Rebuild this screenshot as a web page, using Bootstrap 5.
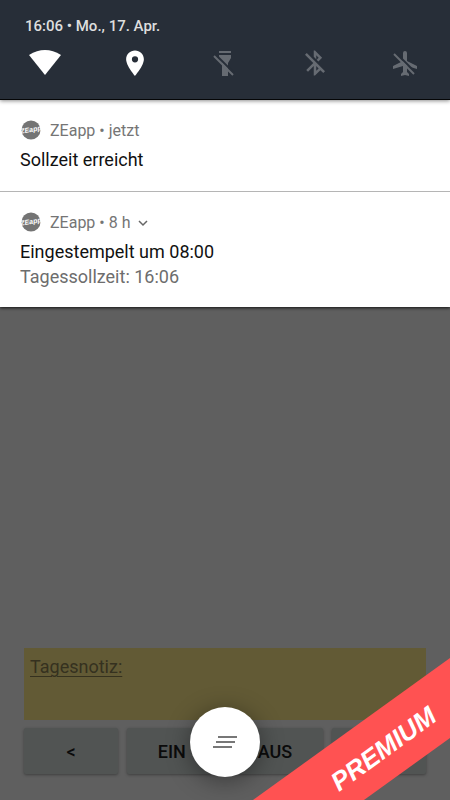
<!DOCTYPE html>
<html lang="de">
<head>
<meta charset="utf-8">
<meta name="viewport" content="width=device-width, initial-scale=1">
<title>ZEapp</title>
<link href="https://cdn.jsdelivr.net/npm/bootstrap@5.3.0/dist/css/bootstrap.min.css" rel="stylesheet">
<style>
body { font-family: Roboto, "Noto Sans", sans-serif; background: #5f5f5f; color: #000; }
.status-bar { background: #272e38; padding: 16px 0 23px; border-bottom: 1px solid #050607; z-index: 1; box-shadow: 0 1px 4px rgba(0,0,0,.45); }
.status-time { font-size: 15px; font-weight: 500; line-height: 20px; color: #dedede; padding-left: 25px; }
.quick { height: 28px; color: #fff; }
.quick.inactive { color: #666b72; }
.quick svg, .notice svg, .clear-all svg { display: block; }
.shade { background: #fff; box-shadow: 0 1px 3px rgba(0,0,0,.8); }
.notice { padding: 20px 20px 19px; }
.notice:last-child { padding-bottom: 18px; }
.notice + .notice { border-top: 1px solid #b5b5b5; }
.notice-head { font-size: 16px; line-height: 22px; color: #757575; gap: 8px; }
.notice-title, .notice-text { font-size: 18px; line-height: 25px; }
.notice-title { margin-top: 5px; color: #111; }
.notice-text { color: #6d6d6d; }
.expand { color: #666; }
.day-panel { padding: 0 24px 26px; }
.day-note { height: 72px; padding: 6px; background: #625a35; color: #35311f; font-size: 18px; line-height: 26px; text-decoration: underline; text-underline-offset: 3px; text-decoration-thickness: 1px; }
.punch-row { display: grid; grid-template-columns: 94fr 196fr 94fr; gap: 9px; margin-top: 8px; }
.punch { height: 46px; padding: 0; border-radius: 2px; background: #515453; color: #0b0b0b; font-size: 18px; font-weight: 500; box-shadow: 0 1px 3px rgba(0,0,0,.35); }
.punch-pair { gap: 72px; }
.clear-all { width: 70px; height: 70px; bottom: 23px; background: #fff; box-shadow: 0 4px 24px rgba(0,0,0,.4); }
.ribbon text { font: italic 700 26px "Liberation Sans", sans-serif; fill: #fff; }
.app-mark text { font: italic 700 7px "Liberation Sans", sans-serif; fill: #fff; }
</style>
</head>
<body>
<div class="position-relative d-flex flex-column min-vh-100 overflow-hidden">
  <header class="status-bar position-relative">
    <div class="status-time">16:06 • Mo., 17. Apr.</div>
    <div class="d-flex mt-2 pt-1">
      <button class="btn quick border-0 flex-fill w-25 p-0 d-flex justify-content-center" aria-label="WLAN"><svg width="34" height="30" viewBox="0 0 34 30"><path fill="currentColor" d="M1 7Q17-3 33 7L17 27Z"/></svg></button>
      <button class="btn quick border-0 flex-fill w-25 p-0 d-flex justify-content-center" aria-label="Standort"><svg width="30" height="30" viewBox="0 0 24 24"><path fill="currentColor" d="M12 2C8.100 2 4.900 5 4.900 9c0 5.300 7.100 13.300 7.100 13.300s7.100-8 7.100-13.300C19.100 5 15.900 2 12 2zm0 9.500a2.500 2.500 0 1 1 0-5 2.500 2.500 0 0 1 0 5z"/></svg></button>
      <button class="btn quick inactive border-0 flex-fill w-25 p-0 d-flex justify-content-center" aria-label="Taschenlampe"><svg width="30" height="30" viewBox="0 0 30 30"><path fill="currentColor" d="M9 3h12v2H9zM9 7h12v3l-3 5v13h-6V15L9 10z"/><path stroke="#272e38" stroke-width="2" d="M4 5l20 20"/><path stroke="currentColor" stroke-width="2" d="M4 8l19 19"/></svg></button>
      <button class="btn quick inactive border-0 flex-fill w-25 p-0 d-flex justify-content-center" aria-label="Bluetooth"><svg width="30" height="30" viewBox="0 0 24 24"><path fill="currentColor" d="M13 5.800l1.900 1.900-1.600 1.600 1.400 1.400 3-3L12 2h-1v5l2 2zM5.400 4L4 5.400l6.600 6.600L5 17.600 6.400 19l4.600-4.600V22h1l4.300-4.300 2.300 2.300 1.400-1.400zm7.600 14.200v-3.800l1.900 1.900z"/></svg></button>
      <button class="btn quick inactive border-0 flex-fill w-25 p-0 d-flex justify-content-center" aria-label="Flugmodus"><svg width="30" height="30" viewBox="0 0 30 30"><path fill="currentColor" d="M13 5a2 2 0 0 1 4 0v8l10 5v3l-10-3v6l2 2v2l-4-1-4 1v-2l2-2v-6L3 21v-3l10-5z"/><path stroke="#272e38" stroke-width="2" d="M5 4l22 22"/><path stroke="currentColor" stroke-width="2" d="M4 6l20 20"/></svg></button>
    </div>
  </header>
  <main class="flex-grow-1 d-flex flex-column">
    <section class="shade">
      <article class="notice">
        <div class="notice-head d-flex align-items-center">
          <svg class="app-mark" width="22" height="22" viewBox="0 0 22 22" aria-hidden="true"><circle cx="11" cy="10" r="9.500" fill="#747474"/><text x="11" y="12" text-anchor="middle" transform="rotate(-10 11 10)">ZEapp</text></svg>
          <span>ZEapp • jetzt</span>
        </div>
        <div class="notice-title">Sollzeit erreicht</div>
      </article>
      <article class="notice">
        <div class="notice-head d-flex align-items-center">
          <svg class="app-mark" width="22" height="22" viewBox="0 0 22 22" aria-hidden="true"><circle cx="11" cy="10" r="9.500" fill="#747474"/><text x="11" y="12" text-anchor="middle" transform="rotate(-10 11 10)">ZEapp</text></svg>
          <span>ZEapp • 8 h</span>
          <button class="btn expand p-0 border-0" aria-label="Erweitern"><svg width="10" height="7" viewBox="0 0 10 7"><path d="M1 1l4 4 4-4" fill="none" stroke="currentColor" stroke-width="1.500"/></svg></button>
        </div>
        <div class="notice-title">Eingestempelt um 08:00</div>
        <div class="notice-text">Tagessollzeit: 16:06</div>
      </article>
    </section>
    <section class="day-panel mt-auto">
      <div class="day-note">Tagesnotiz:</div>
      <div class="punch-row">
        <button class="btn punch border-0">&lt;</button>
        <button class="btn punch punch-pair border-0 d-flex align-items-center justify-content-center"><span>EIN</span><span>AUS</span></button>
        <button class="btn punch border-0" aria-label="Weiter"></button>
      </div>
    </section>
  </main>
  <button class="btn clear-all position-absolute start-50 translate-middle-x rounded-circle border-0 p-0 d-flex align-items-center justify-content-center" aria-label="Alle löschen"><svg width="24" height="14" viewBox="0 0 24 14"><path fill="#777" d="M5 1h19v2H5zM3 6h19v2H3zM0 11h19v2H0z"/></svg></button>
  <svg class="ribbon position-absolute bottom-0 end-0" width="198" height="142" viewBox="0 0 198 142"><path fill="#ff5252" d="M198 0v80l-86 62H1z"/><text transform="translate(87 134) rotate(-36)">PREMIUM</text></svg>
</div>
<script src="https://cdn.jsdelivr.net/npm/bootstrap@5.3.0/dist/js/bootstrap.bundle.min.js"></script>
</body>
</html>
